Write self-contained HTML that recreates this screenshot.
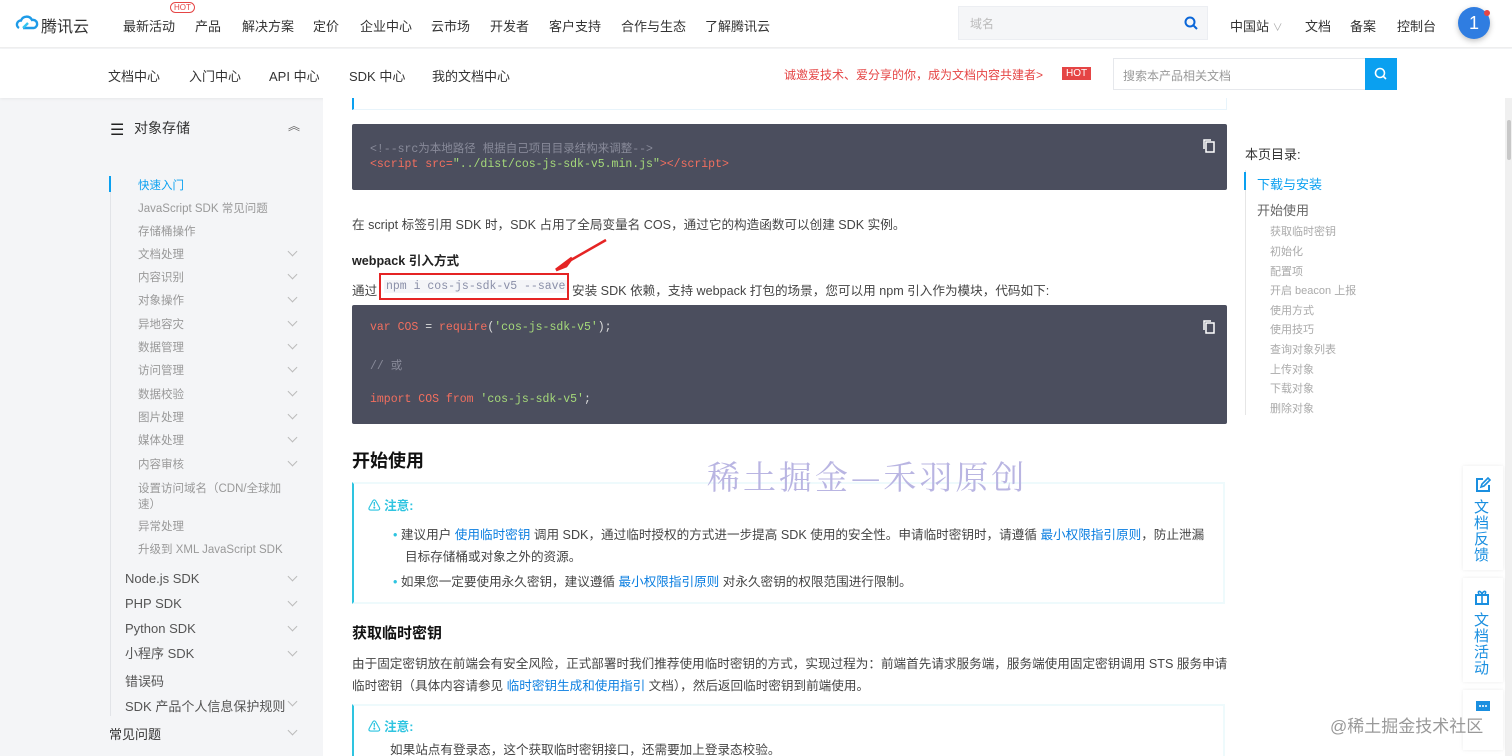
<!DOCTYPE html>
<html><head><meta charset="utf-8"><style>
*{margin:0;padding:0;box-sizing:border-box}
html,body{width:1512px;height:756px;overflow:hidden}
body{position:relative;background:#f4f5f7;font-family:"Liberation Sans","Noto Sans CJK SC",sans-serif;color:#333;font-size:13px}
.a{position:absolute;white-space:nowrap}
.mono{font-family:"Liberation Mono","Noto Sans CJK SC",monospace}
.code{position:absolute;left:352px;width:875px;background:#4b4e5e;border-radius:2px}
.lk{color:#0a7ee0}
.sb{color:#999;font-size:11.5px}
.t{font-size:12.6px}
.chev{position:absolute;left:289px;width:7px;height:7px;border-right:1px solid #bbb;border-bottom:1px solid #bbb;transform:rotate(45deg)}
.toc{color:#aaa;font-size:11px;left:1270px}
</style></head><body>
<div class="a" style="left:0;top:0;width:1512px;height:48px;background:#fff;border-bottom:1px solid #eee"></div>
<svg class="a" style="left:15px;top:14px" width="24" height="20" viewBox="0 0 24 20"><path d="M4 14a4 4 0 0 1 2-7.5A6 6 0 0 1 17 6a4 4 0 0 1 2 8H8" fill="none" stroke="#1e9be8" stroke-width="2.4"/><path d="M8 14l5-5" stroke="#33c5f0" stroke-width="2.4"/></svg>
<div class="a" style="left:41px;top:13px;font-size:16px;color:#333">腾讯云</div>
<div class="a" style="left:123px;top:16px;font-size:13px;color:#333">最新活动</div>
<div class="a" style="left:170px;top:2px;font-size:8px;color:#e54545;border:1px solid #e54545;border-radius:6px;padding:0 3px;line-height:9px;background:#fff">HOT</div>
<div class="a" style="left:195px;top:16px">产品</div>
<div class="a" style="left:242px;top:16px">解决方案</div>
<div class="a" style="left:313px;top:16px">定价</div>
<div class="a" style="left:360px;top:16px">企业中心</div>
<div class="a" style="left:431px;top:16px">云市场</div>
<div class="a" style="left:490px;top:16px">开发者</div>
<div class="a" style="left:549px;top:16px">客户支持</div>
<div class="a" style="left:621px;top:16px">合作与生态</div>
<div class="a" style="left:705px;top:16px">了解腾讯云</div>
<div class="a" style="left:958px;top:6px;width:250px;height:34px;background:#f5f6f8;border:1px solid #eceef2"></div>
<div class="a" style="left:970px;top:15px;color:#bbb;font-size:12px">域名</div>
<svg class="a" style="left:1184px;top:16px" width="14" height="14" viewBox="0 0 14 14"><circle cx="6" cy="6" r="4.5" fill="none" stroke="#0a66d8" stroke-width="2"/><path d="M9.5 9.5L13 13" stroke="#0a66d8" stroke-width="2"/></svg>
<div class="a" style="left:1230px;top:16px">中国站 <span style="color:#aaa;font-size:10px">∨</span></div>
<div class="a" style="left:1305px;top:16px">文档</div>
<div class="a" style="left:1350px;top:16px">备案</div>
<div class="a" style="left:1397px;top:16px">控制台</div>
<div class="a" style="left:1458px;top:7px;width:32px;height:32px;border-radius:50%;background:#2f7de1;color:#fff;font-size:18px;text-align:center;line-height:32px;box-shadow:0 2px 6px rgba(0,0,0,.25)">1</div>
<div class="a" style="left:1484px;top:10px;width:6px;height:6px;border-radius:50%;background:#e54545"></div>
<div class="a" style="left:0;top:49px;width:1512px;height:49px;background:#fff;box-shadow:0 1px 3px rgba(0,0,0,.06)"></div>
<div class="a" style="left:108px;top:66px">文档中心</div>
<div class="a" style="left:189px;top:66px">入门中心</div>
<div class="a" style="left:269px;top:66px">API 中心</div>
<div class="a" style="left:349px;top:66px">SDK 中心</div>
<div class="a" style="left:432px;top:66px">我的文档中心</div>
<div class="a" style="left:784px;top:66px;color:#e54545;font-size:12px">诚邀爱技术、爱分享的你，成为文档内容共建者&gt;</div>
<div class="a" style="left:1062px;top:67px;background:#e54545;color:#fff;font-size:10px;padding:0 4px;line-height:13px">HOT</div>
<div class="a" style="left:1113px;top:58px;width:253px;height:32px;background:#fff;border:1px solid #e6e8ec"></div>
<div class="a" style="left:1123px;top:67px;color:#999;font-size:12px">搜索本产品相关文档</div>
<div class="a" style="left:1365px;top:58px;width:32px;height:32px;background:#0aa0f0"></div>
<svg class="a" style="left:1374px;top:67px" width="14" height="14" viewBox="0 0 14 14"><circle cx="6" cy="6" r="4.5" fill="none" stroke="#fff" stroke-width="1.6"/><path d="M9 9l3 3" stroke="#fff" stroke-width="1.6"/></svg>
<div class="a" style="left:323px;top:98px;width:1182px;height:658px;background:#fff"></div>
<div class="a" style="left:1505px;top:98px;width:7px;height:658px;background:#f0f0f0"></div>
<div class="a" style="left:1507px;top:120px;width:4px;height:40px;background:#c8c8c8;border-radius:2px"></div>
<div class="a" style="left:110px;top:120px;font-size:16px;color:#222">☰</div>
<div class="a" style="left:134px;top:118px;font-size:14px;color:#333">对象存储</div>
<div class="a" style="left:288px;top:117px;font-size:12px;color:#666">︽</div>
<div class="a" style="left:110px;top:176px;width:1px;height:540px;background:#e2e4e8"></div>
<div class="a" style="left:109px;top:176px;width:2px;height:16px;background:#0aa0f0"></div>
<div class="a sb" style="left:138px;top:177px;color:#0aa0f0">快速入门</div>
<div class="a sb" style="left:138px;top:200px">JavaScript SDK 常见问题</div>
<div class="a sb" style="left:138px;top:223px">存储桶操作</div>
<div class="a sb" style="left:138px;top:246px">文档处理</div><div class="chev" style="top:248px"></div>
<div class="a sb" style="left:138px;top:269px">内容识别</div><div class="chev" style="top:271px"></div>
<div class="a sb" style="left:138px;top:292px">对象操作</div><div class="chev" style="top:294px"></div>
<div class="a sb" style="left:138px;top:316px">异地容灾</div><div class="chev" style="top:318px"></div>
<div class="a sb" style="left:138px;top:339px">数据管理</div><div class="chev" style="top:341px"></div>
<div class="a sb" style="left:138px;top:362px">访问管理</div><div class="chev" style="top:364px"></div>
<div class="a sb" style="left:138px;top:386px">数据校验</div><div class="chev" style="top:388px"></div>
<div class="a sb" style="left:138px;top:409px">图片处理</div><div class="chev" style="top:411px"></div>
<div class="a sb" style="left:138px;top:432px">媒体处理</div><div class="chev" style="top:434px"></div>
<div class="a sb" style="left:138px;top:456px">内容审核</div><div class="chev" style="top:458px"></div>
<div class="a sb" style="left:138px;top:480px">设置访问域名（CDN/全球加</div>
<div class="a sb" style="left:138px;top:496px">速）</div>
<div class="a sb" style="left:138px;top:518px">异常处理</div>
<div class="a sb" style="left:138px;top:541px">升级到 XML JavaScript SDK</div>
<div class="a" style="left:125px;top:571px;color:#555">Node.js SDK</div><div class="chev" style="top:573px"></div>
<div class="a" style="left:125px;top:596px;color:#555">PHP SDK</div><div class="chev" style="top:598px"></div>
<div class="a" style="left:125px;top:621px;color:#555">Python SDK</div><div class="chev" style="top:623px"></div>
<div class="a" style="left:125px;top:646px;color:#555;line-height:15px">小程序 SDK</div><div class="chev" style="top:648px"></div>
<div class="a" style="left:125px;top:671px;color:#555">错误码</div>
<div class="a" style="left:125px;top:696px;color:#555">SDK 产品个人信息保护规则</div><div class="chev" style="top:698px"></div>
<div class="a" style="left:109px;top:724px;color:#333">常见问题</div><div class="chev" style="top:727px"></div>
<div class="a" style="left:352px;top:98px;width:875px;height:12px;border:1px solid #e8f4fb;border-top:none;border-left:2px solid #0aa0f0;background:#fff"></div>
<div class="code" style="top:124px;height:66px"></div>
<div class="a mono" style="left:370px;top:140px;font-size:11.5px;color:#888a99">&lt;!--src为本地路径 根据自己项目目录结构来调整--&gt;</div>
<div class="a mono" style="left:370px;top:158px;font-size:11.5px;color:#f26f5f">&lt;script src=<span style="color:#a5d97a">"../dist/cos-js-sdk-v5.min.js"</span>&gt;&lt;/script&gt;</div>
<svg class="a" style="left:1203px;top:139px" width="12" height="14" viewBox="0 0 12 14"><rect x="3" y="3" width="8" height="10" fill="none" stroke="#fff" stroke-width="1.5"/><path d="M1 10V1h7" fill="none" stroke="#fff" stroke-width="1.5"/></svg>
<div class="a t" style="left:352px;top:214px;color:#444">在 script 标签引用 SDK 时，SDK 占用了全局变量名 COS，通过它的构造函数可以创建 SDK 实例。</div>
<div class="a t" style="left:352px;top:250px;font-weight:bold;color:#222">webpack 引入方式</div>
<svg class="a" style="left:550px;top:238px" width="60" height="34" viewBox="0 0 60 34"><path d="M56 2L14 26" stroke="#e52424" stroke-width="2.5"/><path d="M6 32L22 20L16 28Z" fill="#e52424" stroke="#e52424" stroke-width="3"/></svg>
<div class="a t" style="left:352px;top:280px;color:#444">通过</div>
<div class="a" style="left:379px;top:273px;width:190px;height:27px;border:2px solid #e52424;background:#fff"></div>
<div class="a mono" style="left:384px;top:280px;font-size:11.5px;color:#8a8fa8;background:#f4f5f8;padding:0 2px">npm i cos-js-sdk-v5 --save</div>
<div class="a t" style="left:572px;top:280px;color:#444">安装 SDK 依赖，支持 webpack 打包的场景，您可以用 npm 引入作为模块，代码如下:</div>
<div class="code" style="top:305px;height:119px"></div>
<div class="a mono" style="left:370px;top:321px;font-size:11.5px;color:#f26f5f">var COS <span style="color:#ddd">=</span> require<span style="color:#ddd">(</span><span style="color:#a5d97a">'cos-js-sdk-v5'</span><span style="color:#ddd">);</span></div>
<div class="a mono" style="left:370px;top:357px;font-size:11.5px;color:#888a99">// 或</div>
<div class="a mono" style="left:370px;top:393px;font-size:11.5px;color:#f26f5f">import COS from <span style="color:#a5d97a">'cos-js-sdk-v5'</span><span style="color:#ddd">;</span></div>
<svg class="a" style="left:1203px;top:320px" width="12" height="14" viewBox="0 0 12 14"><rect x="3" y="3" width="8" height="10" fill="none" stroke="#fff" stroke-width="1.5"/><path d="M1 10V1h7" fill="none" stroke="#fff" stroke-width="1.5"/></svg>
<div class="a" style="left:352px;top:447px;font-size:18px;font-weight:bold;color:#111">开始使用</div>
<div class="a" style="left:352px;top:482px;width:873px;height:122px;border:2px solid #eefafc;border-left:2px solid #2ec4e0;background:#fff"></div>
<div class="a t" style="left:368px;top:495px;color:#2ec4e0;font-weight:bold">⚠ 注意:</div>
<div class="a t" style="left:393px;top:524px;color:#444"><span style="color:#2ec4e0">• </span>建议用户 <span class="lk">使用临时密钥</span> 调用 SDK，通过临时授权的方式进一步提高 SDK 使用的安全性。申请临时密钥时，请遵循 <span class="lk">最小权限指引原则</span>，防止泄漏</div>
<div class="a t" style="left:405px;top:546px;color:#444">目标存储桶或对象之外的资源。</div>
<div class="a t" style="left:393px;top:571px;color:#444"><span style="color:#2ec4e0">• </span>如果您一定要使用永久密钥，建议遵循 <span class="lk">最小权限指引原则</span> 对永久密钥的权限范围进行限制。</div>
<div class="a" style="left:352px;top:622px;font-size:15px;font-weight:bold;color:#111">获取临时密钥</div>
<div class="a t" style="left:352px;top:653px;color:#444">由于固定密钥放在前端会有安全风险，正式部署时我们推荐使用临时密钥的方式，实现过程为：前端首先请求服务端，服务端使用固定密钥调用 STS 服务申请</div>
<div class="a t" style="left:352px;top:675px;color:#444">临时密钥（具体内容请参见 <span class="lk">临时密钥生成和使用指引</span> 文档），然后返回临时密钥到前端使用。</div>
<div class="a" style="left:352px;top:704px;width:873px;height:60px;border:2px solid #eefafc;border-left:2px solid #2ec4e0;background:#fff"></div>
<div class="a t" style="left:368px;top:716px;color:#2ec4e0;font-weight:bold">⚠ 注意:</div>
<div class="a t" style="left:390px;top:739px;color:#444">如果站点有登录态，这个获取临时密钥接口，还需要加上登录态校验。</div>
<div class="a" style="left:707px;top:452px;font-size:33px;color:#b9b5e2;letter-spacing:3px;font-family:'Noto Serif CJK SC',serif">稀土掘金—禾羽原创</div>
<div class="a" style="left:1245px;top:144px;color:#333">本页目录:</div>
<div class="a" style="left:1245px;top:170px;width:1px;height:245px;background:#e6e6e6"></div>
<div class="a" style="left:1244px;top:172px;width:2px;height:18px;background:#0aa0f0"></div>
<div class="a" style="left:1257px;top:174px;color:#0aa0f0">下载与安装</div>
<div class="a" style="left:1257px;top:200px;color:#666">开始使用</div>
<div class="a toc" style="top:223px">获取临时密钥</div>
<div class="a toc" style="top:243px">初始化</div>
<div class="a toc" style="top:263px">配置项</div>
<div class="a toc" style="top:282px">开启 beacon 上报</div>
<div class="a toc" style="top:302px">使用方式</div>
<div class="a toc" style="top:321px">使用技巧</div>
<div class="a toc" style="top:341px">查询对象列表</div>
<div class="a toc" style="top:361px">上传对象</div>
<div class="a toc" style="top:380px">下载对象</div>
<div class="a toc" style="top:400px">删除对象</div>
<div class="a" style="left:1463px;top:466px;width:40px;height:104px;background:#fff;box-shadow:0 0 4px rgba(0,0,0,.08)"></div>
<svg class="a" style="left:1475px;top:477px" width="16" height="16" viewBox="0 0 16 16"><path d="M8 2H2v12h12V8" fill="none" stroke="#1a8fe0" stroke-width="2"/><path d="M6 10l1-3 6-6 2 2-6 6z" fill="none" stroke="#1a8fe0" stroke-width="1.6"/></svg>
<div class="a" style="left:1474px;top:500px;width:16px;font-size:15px;line-height:16px;color:#1a8fe0;white-space:normal">文档反馈</div>
<div class="a" style="left:1463px;top:578px;width:40px;height:104px;background:#fff;box-shadow:0 0 4px rgba(0,0,0,.08)"></div>
<svg class="a" style="left:1474px;top:589px" width="16" height="16" viewBox="0 0 16 16"><rect x="2" y="6" width="12" height="9" fill="none" stroke="#1a8fe0" stroke-width="2"/><path d="M1 6h14M8 6v9M8 5C6 1 3 2 5 5M8 5c2-4 5-3 3 0" fill="none" stroke="#1a8fe0" stroke-width="1.6"/></svg>
<div class="a" style="left:1474px;top:613px;width:16px;font-size:15px;line-height:16px;color:#1a8fe0;white-space:normal">文档活动</div>
<div class="a" style="left:1463px;top:690px;width:40px;height:60px;background:#fff;box-shadow:0 0 4px rgba(0,0,0,.08)"></div>
<svg class="a" style="left:1475px;top:700px" width="16" height="14" viewBox="0 0 16 14"><rect x="1" y="1" width="14" height="10" fill="#1a8fe0"/><circle cx="5" cy="6" r="1" fill="#fff"/><circle cx="8" cy="6" r="1" fill="#fff"/><circle cx="11" cy="6" r="1" fill="#fff"/></svg>
<div class="a" style="left:1330px;top:712px;font-size:17px;color:#999">@稀土掘金技术社区</div>
</body></html>
